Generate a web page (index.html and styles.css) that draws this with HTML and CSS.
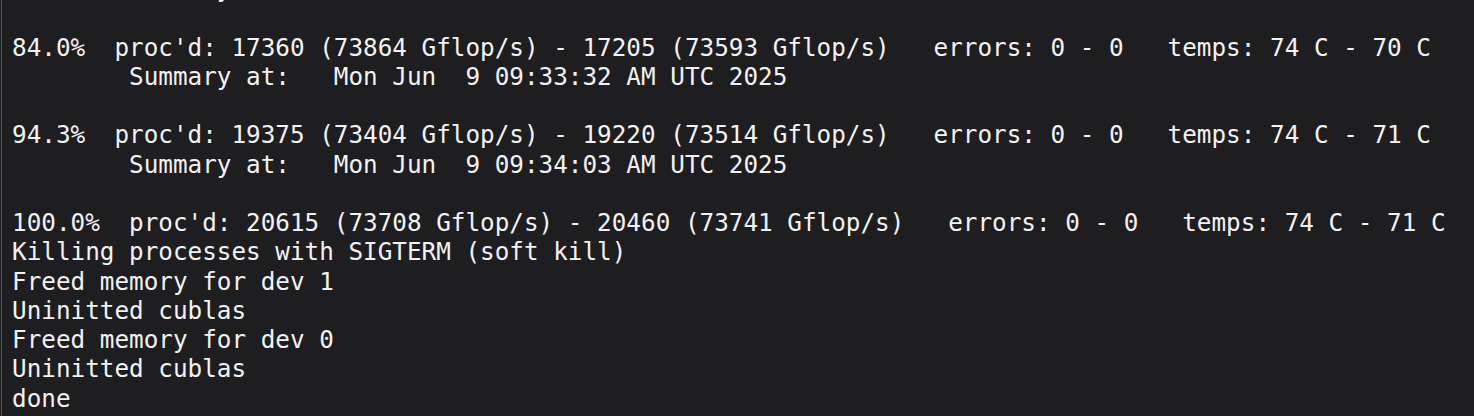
FILE: index.html
```html
<!DOCTYPE html>
<html>
<head>
<meta charset="utf-8">
<link rel="stylesheet" href="styles.css">
</head>
<body>
<div class="terminal">
<pre class="output">        Summary at:   Mon Jun  9 09:33:01 AM UTC 2025

84.0%  proc'd: 17360 (73864 Gflop/s) - 17205 (73593 Gflop/s)   errors: 0 - 0   temps: 74 C - 70 C
        Summary at:   Mon Jun  9 09:33:32 AM UTC 2025

94.3%  proc'd: 19375 (73404 Gflop/s) - 19220 (73514 Gflop/s)   errors: 0 - 0   temps: 74 C - 71 C
        Summary at:   Mon Jun  9 09:34:03 AM UTC 2025

100.0%  proc'd: 20615 (73708 Gflop/s) - 20460 (73741 Gflop/s)   errors: 0 - 0   temps: 74 C - 71 C
Killing processes with SIGTERM (soft kill)
Freed memory for dev 1
Uninitted cublas
Freed memory for dev 0
Uninitted cublas
done</pre>
</div>
</body>
</html>
```
FILE: styles.css
```css
html, body {
  margin: 0;
  padding: 0;
  background: #1e1d20;
  height: 100%;
  overflow: hidden;
}
.terminal {
  height: 100%;
  margin-left: 1px;
  border-left: 1px solid #56565a;
  box-shadow: inset 1px 0 0 #1a1a1c;
  background: #1e1d20;
  padding-left: 10px;
  overflow: hidden;
}
.output {
  margin: -26px 0 0 0;
  font-family: "DejaVu Sans Mono", "Liberation Mono", monospace;
  font-size: 24.3px;
  line-height: 29.25px;
  color: #f2f2f2;
  white-space: pre;
}
```
